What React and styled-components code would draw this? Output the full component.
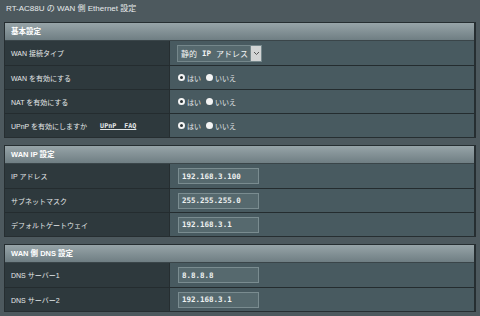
import React from "react";
import styled, { createGlobalStyle } from "styled-components";

const GlobalStyle = createGlobalStyle`
  body {
    margin: 0;
    background: #4d595e;
    font-family: "Liberation Sans", "Noto Sans CJK JP", sans-serif;
    color: #e2e6e7;
  }
`;

const Page = styled.div`
  width: 480px;
  height: 316px;
  padding: 3px 4px 0 4px;
  box-sizing: border-box;
  display: flex;
  flex-direction: column;
  gap: 7px;
`;

const Title = styled.div`
  font-size: 8px;
  line-height: 12px;
  padding-left: 2px;
  color: #e6eaeb;
`;

const Section = styled.div`
  border: 1px solid #262e31;
  border-right-width: 2px;
  background: #485a60;
`;

const Header = styled.div`
  height: 17px;
  line-height: 17px;
  padding-left: 6px;
  font-size: 7.5px;
  font-weight: bold;
  color: #ffffff;
  background: linear-gradient(#97a4a8, #6f7e83);
  border-bottom: 1px solid #3a4549;
`;

const Row = styled.div`
  display: grid;
  grid-template-columns: 165px 1fr;
  height: 24px;
  box-sizing: border-box;
  border-top: 1px solid #242c2f;
  &:nth-child(2) {
    border-top: none;
  }
`;

const Label = styled.div`
  background: #2e393d;
  display: flex;
  align-items: center;
  gap: 13px;
  padding-left: 6px;
  font-size: 7px;
  color: #e4e8e9;
  border-right: 1px solid #262e31;
`;

const Cell = styled.div`
  display: flex;
  align-items: center;
  padding-left: 7px;
`;

const FaqLink = styled.span`
  font-family: "DejaVu Sans Mono", monospace;
  font-size: 6.7px;
  font-weight: bold;
  text-decoration: underline;
  color: #e4e8e9;
`;

const Select = styled.div`
  display: flex;
  align-items: center;
  height: 15px;
  background: #56696e;
  border: 1px solid #75878b;
  font-size: 8px;
  color: #f2f4f4;
  padding-left: 3px;
`;

const Mono = styled.span`
  font-family: "DejaVu Sans Mono", monospace;
  font-size: 7.5px;
  font-weight: bold;
  margin: 0 5px;
`;

const Arrow = styled.span`
  display: flex;
  align-items: center;
  justify-content: center;
  width: 10px;
  height: 15px;
  margin-left: 2px;
  background: #d2d4d4;
  border-left: 1px solid #75878b;
`;

const Radio = styled.span`
  display: inline-block;
  width: 7px;
  height: 7px;
  box-sizing: border-box;
  border-radius: 50%;
  background: ${(p) => (p.$checked ? "#2a3336" : "#f4f4f4")};
  border: ${(p) => (p.$checked ? "2px solid #f4f4f4" : "none")};
  margin-right: 2px;
`;

const RadioGroup = styled.div`
  display: flex;
  align-items: center;
  font-size: 7px;
  color: #e4e8e9;
  gap: 5px;
  padding-left: 1px;
`;

const Option = styled.span`
  display: flex;
  align-items: center;
`;

const Input = styled.div`
  width: 81px;
  height: 16px;
  box-sizing: border-box;
  margin-left: 1px;
  background: #56696e;
  border: 1px solid #7a8c90;
  display: flex;
  align-items: center;
  padding-left: 3px;
  font-family: "DejaVu Sans Mono", monospace;
  font-size: 7.5px;
  font-weight: bold;
  color: #eef1f1;
`;

const YesNo = () => (
  <RadioGroup>
    <Option>
      <Radio $checked />
      はい
    </Option>
    <Option>
      <Radio />
      いいえ
    </Option>
  </RadioGroup>
);

const ipRows = [
  ["IP アドレス", "192.168.3.100"],
  ["サブネットマスク", "255.255.255.0"],
  ["デフォルトゲートウェイ", "192.168.3.1"],
];

const dnsRows = [
  ["DNS サーバー1", "8.8.8.8"],
  ["DNS サーバー2", "192.168.3.1"],
];

export default function App() {
  return (
    <Page>
      <GlobalStyle />
      <Title>RT-AC88U の WAN 側 Ethernet 設定</Title>

      <Section>
        <Header>基本設定</Header>
        <Row>
          <Label>WAN 接続タイプ</Label>
          <Cell>
            <Select>
              静的<Mono>IP</Mono>アドレス
              <Arrow>
                <svg width="7" height="5" viewBox="0 0 7 5">
                  <path d="M1 1l2.5 2.5L6 1" fill="none" stroke="#555" strokeWidth="1" />
                </svg>
              </Arrow>
            </Select>
          </Cell>
        </Row>
        <Row>
          <Label>WAN を有効にする</Label>
          <Cell>
            <YesNo />
          </Cell>
        </Row>
        <Row>
          <Label>NAT を有効にする</Label>
          <Cell>
            <YesNo />
          </Cell>
        </Row>
        <Row>
          <Label>
            UPnP を有効にしますか
            <FaqLink>UPnP&nbsp;&nbsp;FAQ</FaqLink>
          </Label>
          <Cell>
            <YesNo />
          </Cell>
        </Row>
      </Section>

      <Section>
        <Header>WAN IP 設定</Header>
        {ipRows.map(([label, value]) => (
          <Row key={label}>
            <Label>{label}</Label>
            <Cell>
              <Input>{value}</Input>
            </Cell>
          </Row>
        ))}
      </Section>

      <Section>
        <Header>WAN 側 DNS 設定</Header>
        {dnsRows.map(([label, value]) => (
          <Row key={label}>
            <Label>{label}</Label>
            <Cell>
              <Input>{value}</Input>
            </Cell>
          </Row>
        ))}
      </Section>
    </Page>
  );
}
